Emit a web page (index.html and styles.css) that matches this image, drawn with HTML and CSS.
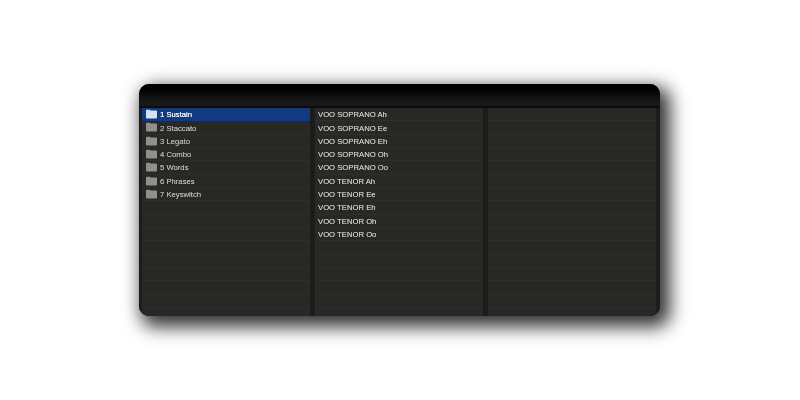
FILE: index.html
```html
<!DOCTYPE html>
<html lang="en">
<head>
<meta charset="utf-8">
<title>Browser</title>
<link rel="stylesheet" href="styles.css">
</head>
<body>
<svg class="defs" width="0" height="0" aria-hidden="true"><symbol id="folder" viewBox="0 0 12 10"><path d="M0 1.2C0 .6.4.3.9.3h3.2l.9 1h6.1c.5 0 .9.3.9.8v7c0 .5-.4.9-.9.9H.9C.4 10 0 9.700 0 9.100z"/></symbol></svg>
<main class="panel">
  <header class="toolbar"></header>
  <div class="columns">
    <ul class="column first">
      <li class="row selected"><svg class="folder"><use href="#folder"/></svg>1 Sustain</li>
      <li class="row"><svg class="folder"><use href="#folder"/></svg>2 Staccato</li>
      <li class="row"><svg class="folder"><use href="#folder"/></svg>3 Legato</li>
      <li class="row"><svg class="folder"><use href="#folder"/></svg>4 Combo</li>
      <li class="row"><svg class="folder"><use href="#folder"/></svg>5 Words</li>
      <li class="row"><svg class="folder"><use href="#folder"/></svg>6 Phrases</li>
      <li class="row"><svg class="folder"><use href="#folder"/></svg>7 Keyswitch</li>
      <li class="row"></li><li class="row"></li><li class="row"></li><li class="row"></li><li class="row"></li><li class="row"></li><li class="row"></li><li class="row"></li><li class="row"></li>
    </ul>
    <ul class="column second">
      <li class="row">VOO SOPRANO Ah</li>
      <li class="row">VOO SOPRANO Ee</li>
      <li class="row">VOO SOPRANO Eh</li>
      <li class="row">VOO SOPRANO Oh</li>
      <li class="row">VOO SOPRANO Oo</li>
      <li class="row">VOO TENOR Ah</li>
      <li class="row">VOO TENOR Ee</li>
      <li class="row">VOO TENOR Eh</li>
      <li class="row">VOO TENOR Oh</li>
      <li class="row">VOO TENOR Oo</li>
      <li class="row"></li><li class="row"></li><li class="row"></li><li class="row"></li><li class="row"></li><li class="row"></li>
    </ul>
    <ul class="column third">
      <li class="row"></li><li class="row"></li><li class="row"></li><li class="row"></li><li class="row"></li><li class="row"></li><li class="row"></li><li class="row"></li><li class="row"></li><li class="row"></li><li class="row"></li><li class="row"></li><li class="row"></li><li class="row"></li><li class="row"></li><li class="row"></li>
    </ul>
  </div>
</main>
</body>
</html>
```
FILE: styles.css
```css
html, body { margin: 0; height: 100%; background: #fff; }
body { padding: 84px 140px 84px 139px; box-sizing: border-box; font-family: "Liberation Sans", Arial, sans-serif; }
.defs { position: absolute; }
.panel {
  width: 521px; height: 232px;
  display: flex; flex-direction: column;
  border-radius: 10px;
  overflow: hidden;
  background: #222221;
  box-shadow: 6px 7px 18px 4px rgba(0,0,0,.8);
}
.toolbar {
  height: 22px; flex: none;
  background: linear-gradient(#000 0, #000 5px, #141414 15px, #1a1a1a 100%);
  border-bottom: 2px solid #0c0c0c;
}
.columns {
  flex: 1; min-height: 0;
  display: grid; grid-template-columns: repeat(3, 168px);
  gap: 5px;
  padding: 0 4px 0 3px;
  background: #1c1c1b;
}
.column { list-style: none; margin: 0; padding: 0; overflow: hidden; background: #282827; filter: blur(.3px); }
.row {
  box-sizing: border-box; height: 13.33px;
  display: flex; align-items: center;
  padding: 2px 0 0 3px;
  border-bottom: 1px solid #2e2e2d;
  font-size: 7.7px; line-height: 12px;
  color: #d0d0cb;
  white-space: nowrap;
  text-shadow: 0 0 .6px rgba(200,200,195,.7);
}
.first .row { padding-left: 4px; color: #b9b9b4; }
.folder { width: 11px; height: 10px; margin: -2px 3px 0 0; fill: #8f8f8c; flex: none; }
.first .row.selected { background: #123a82; color: #f2f4f8; text-shadow: 0 0 .6px #f2f4f8; border-bottom-color: #123a82; }
.selected .folder { fill: #d3e2f5; }
```
